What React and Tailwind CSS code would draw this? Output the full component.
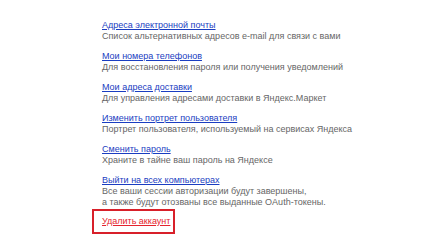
const items = [
  { title: "Адреса электронной почты", desc: ["Список альтернативных адресов e-mail для связи с вами"] },
  { title: "Мои номера телефонов", desc: ["Для восстановления пароля или получения уведомлений"] },
  { title: "Мои адреса доставки", desc: ["Для управления адресами доставки в Яндекс.Маркет"] },
  { title: "Изменить портрет пользователя", desc: ["Портрет пользователя, используемый на сервисах Яндекса"] },
  { title: "Сменить пароль", desc: ["Храните в тайне ваш пароль на Яндексе"] },
  {
    title: "Выйти на всех компьютерах",
    desc: ["Все ваши сессии авторизации будут завершены,", "а также будут отозваны все выданные OAuth-токены."],
  },
];

export default function App() {
  return (
    <div className="w-[434px] h-[246px] bg-white font-['Liberation_Sans',Arial,sans-serif] text-[9px] leading-[11px]">
      <div className="pl-[102px] pt-[20px] flex flex-col gap-[9px]">
        {items.map((item) => (
          <div key={item.title}>
            <a href="#" className="text-[#1a3dc1] underline">{item.title}</a>
            {item.desc.map((line) => (
              <div key={line} className="text-[#666]">{line}</div>
            ))}
          </div>
        ))}
      </div>
      <div className="ml-[92px] mt-[1px] w-[83px] h-[25px] border-2 border-[#d8202a] flex items-center pl-[8px]">
        <a href="#" className="text-[#e5232d] underline">Удалить аккаунт</a>
      </div>
    </div>
  );
}
